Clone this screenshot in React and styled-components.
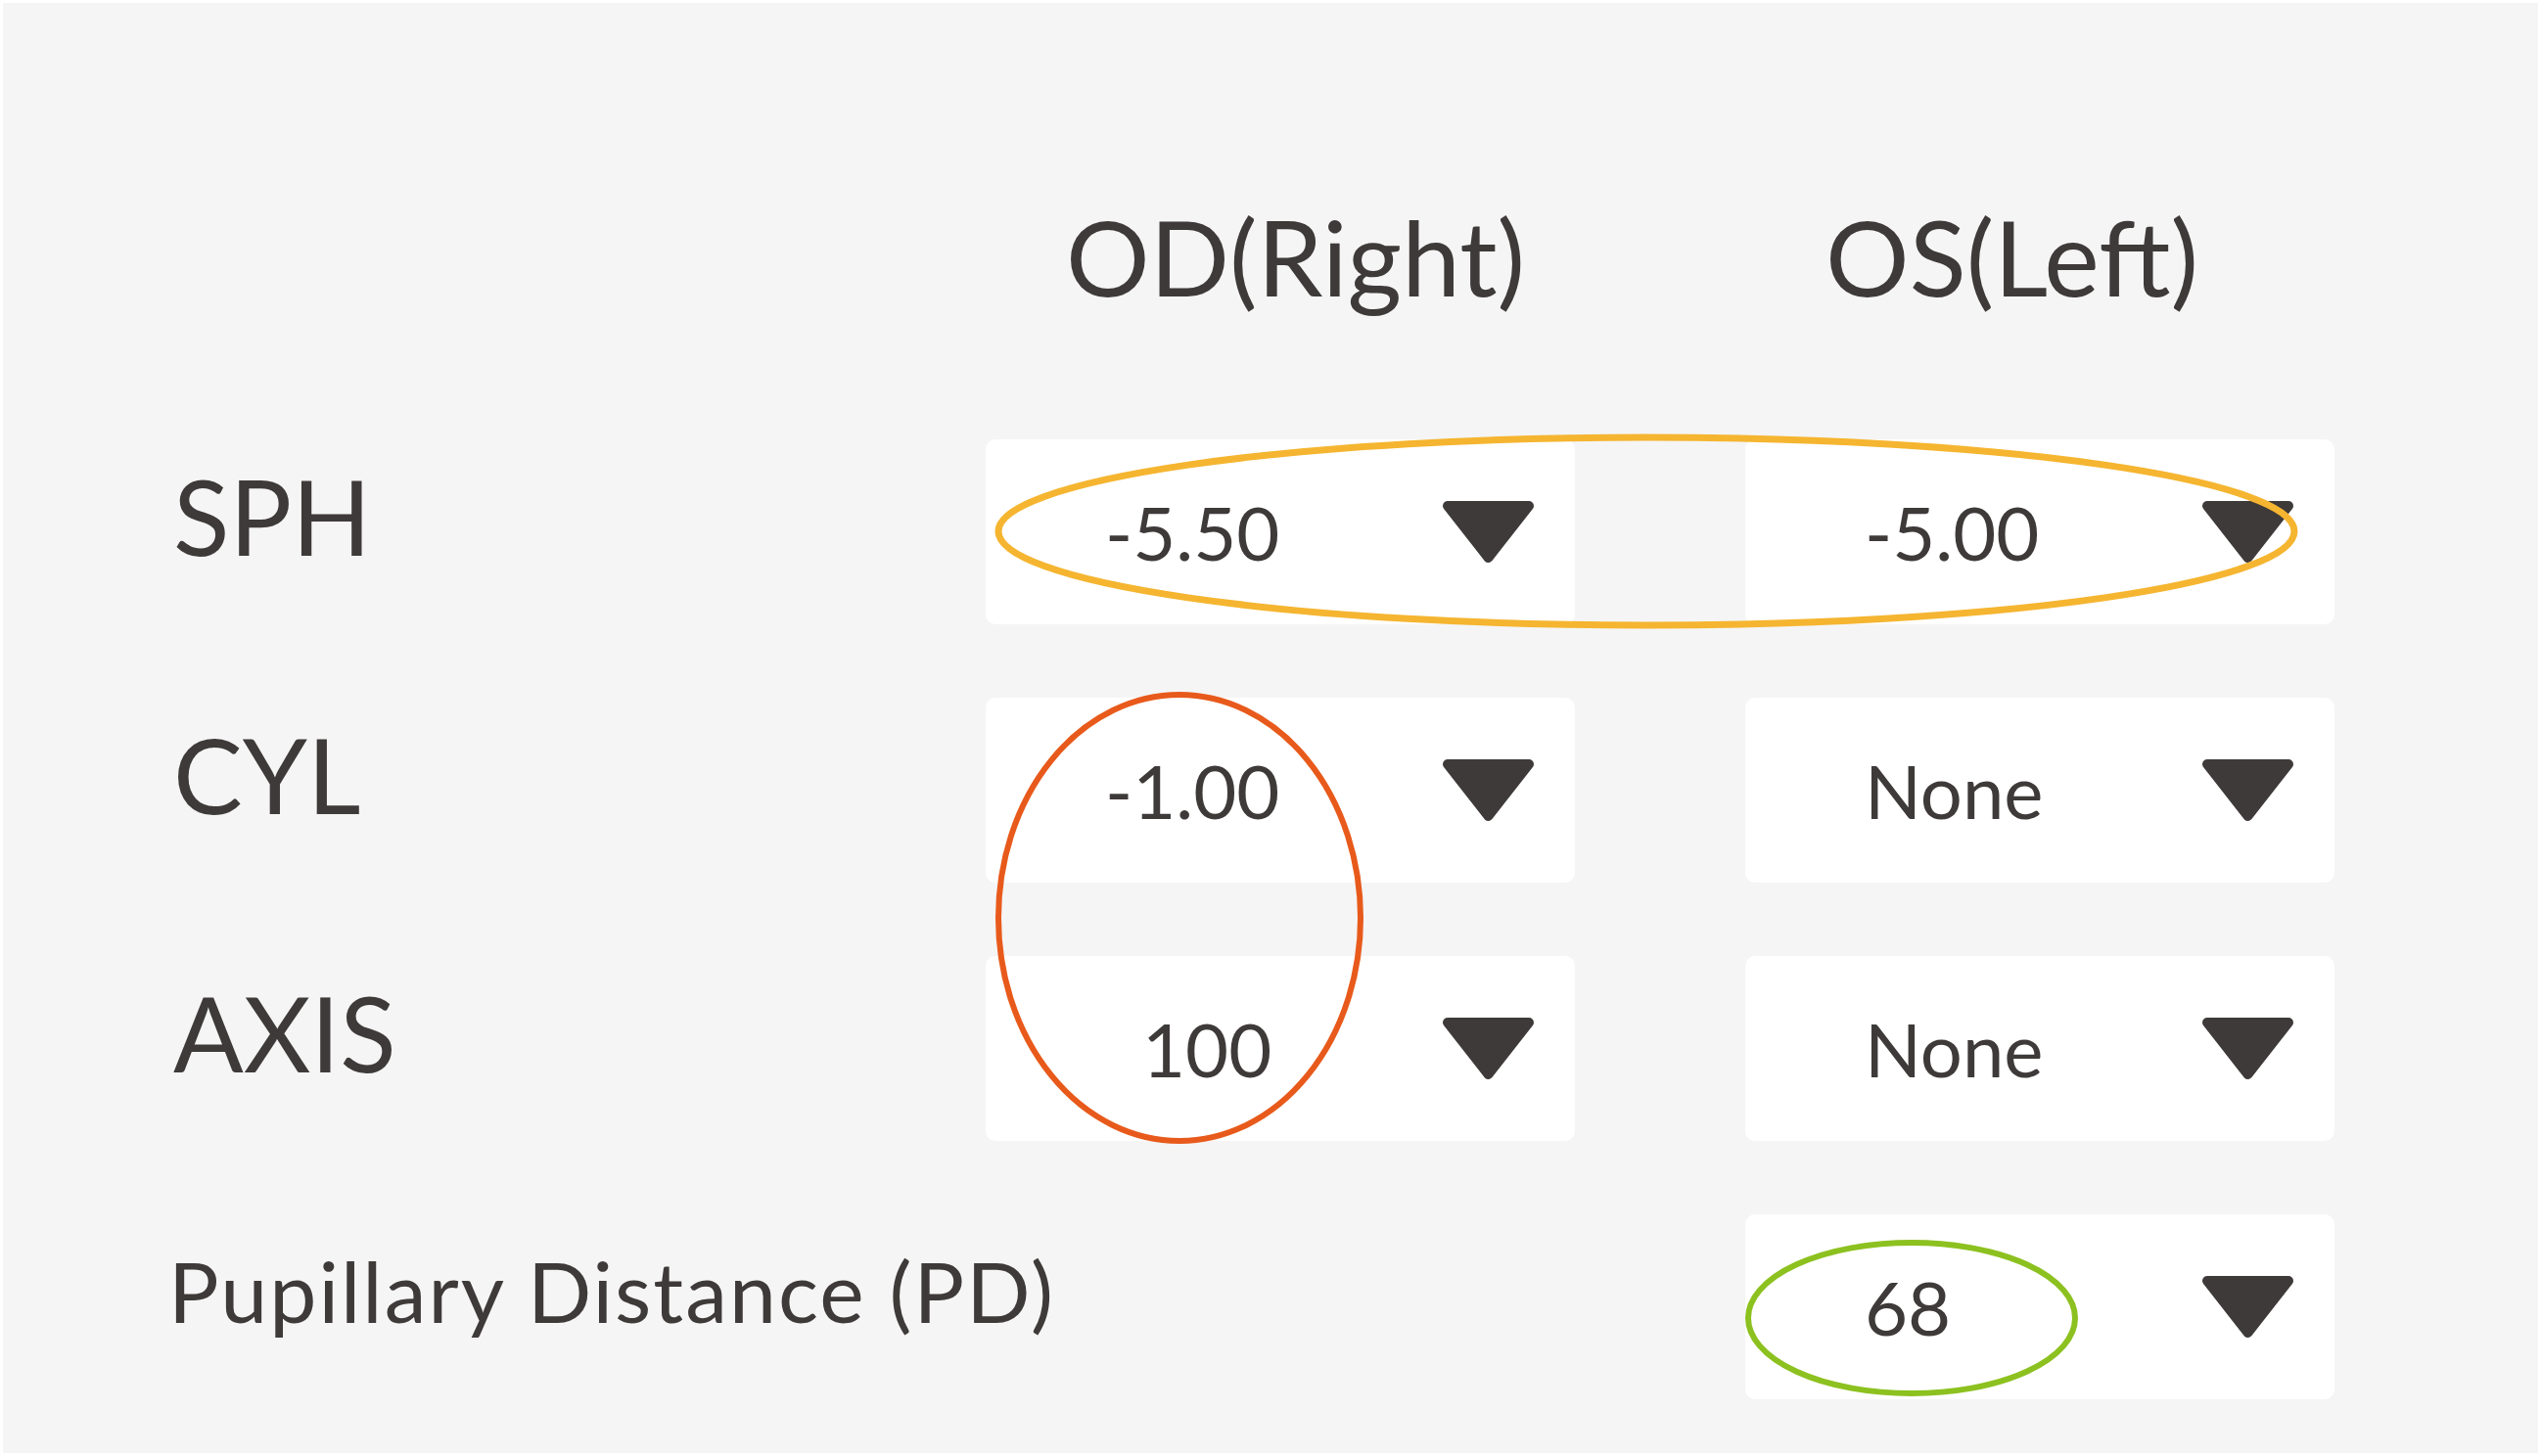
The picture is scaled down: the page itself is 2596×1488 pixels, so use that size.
import React from 'react';
import styled, { createGlobalStyle } from 'styled-components';

const GlobalStyle = createGlobalStyle`
  html, body {
    margin: 0;
    padding: 0;
    background: #ffffff;
  }
`;

const ink = '#3e3a39';

const Frame = styled.div`
  position: relative;
  box-sizing: border-box;
  width: 2596px;
  height: 1488px;
  border: 3px solid #ffffff;
  background: #f5f5f5;
  padding: 205px 0 0 174px;
  font-family: Lato, "Open Sans", sans-serif;
  color: ${ink};
  overflow: hidden;
`;

const Grid = styled.div`
  display: grid;
  grid-template-columns: 656px 602px 602px;
  grid-template-rows: 166px repeat(4, 189px);
  column-gap: 174px;
  row-gap: 75px;
`;

const HeaderCell = styled.div`
  align-self: start;
  font-size: 107px;
  line-height: 1;
  padding-left: 82px;
  white-space: nowrap;
`;

const Label = styled.div`
  display: flex;
  align-items: center;
  padding-bottom: 34px;
  font-size: ${p => (p.small ? '86px' : '106px')};
  letter-spacing: ${p => (p.small ? '2px' : '0')};
  margin-left: ${p => (p.small ? '-5px' : '0')};
  white-space: nowrap;
`;

const Select = styled.div`
  display: flex;
  align-items: center;
  justify-content: space-between;
  box-sizing: border-box;
  background: #ffffff;
  border-radius: 10px;
  padding: 0 41px 0 ${p => 122 + (p.indent || 0)}px;
`;

const Value = styled.span`
  font-size: 76px;
  line-height: 1;
`;

const Ring = styled.svg`
  position: absolute;
  overflow: visible;
  pointer-events: none;
`;

const Arrow = () => (
  <svg width="95" height="63" viewBox="0 0 95 63">
    <polygon
      points="6,5 89,5 47.5,58"
      fill={ink}
      stroke={ink}
      strokeWidth="10"
      strokeLinejoin="round"
    />
  </svg>
);

const Field = ({ value, indent }) => (
  <Select indent={indent}>
    <Value>{value}</Value>
    <Arrow />
  </Select>
);

const Ellipse = ({ cx, cy, rx, ry, color, width }) => (
  <Ring
    style={{ left: cx - rx - 3, top: cy - ry - 3, width: rx * 2, height: ry * 2 }}
    width={rx * 2}
    height={ry * 2}
  >
    <ellipse cx={rx} cy={ry} rx={rx} ry={ry} fill="none" stroke={color} strokeWidth={width} />
  </Ring>
);

const rows = [
  { label: 'SPH', od: '-5.50', os: '-5.00' },
  { label: 'CYL', od: '-1.00', os: 'None' },
  { label: 'AXIS', od: '100', os: 'None', odIndent: 38 },
];

export default function App() {
  return (
    <>
      <GlobalStyle />
      <Frame>
        <Grid>
          <div />
          <HeaderCell>OD(Right)</HeaderCell>
          <HeaderCell>OS(Left)</HeaderCell>
          {rows.map(r => (
            <React.Fragment key={r.label}>
              <Label>{r.label}</Label>
              <Field value={r.od} indent={r.odIndent} />
              <Field value={r.os} />
            </React.Fragment>
          ))}
          <Label small>Pupillary Distance (PD)</Label>
          <div />
          <Field value="68" />
        </Grid>
        <Ellipse cx={1682} cy={543} rx={662} ry={96} color="#f5b530" width={7} />
        <Ellipse cx={1205} cy={938} rx={185} ry={228} color="#e85a1b" width={6} />
        <Ellipse cx={1953} cy={1347} rx={167} ry={77} color="#8cc11f" width={6} />
      </Frame>
    </>
  );
}
